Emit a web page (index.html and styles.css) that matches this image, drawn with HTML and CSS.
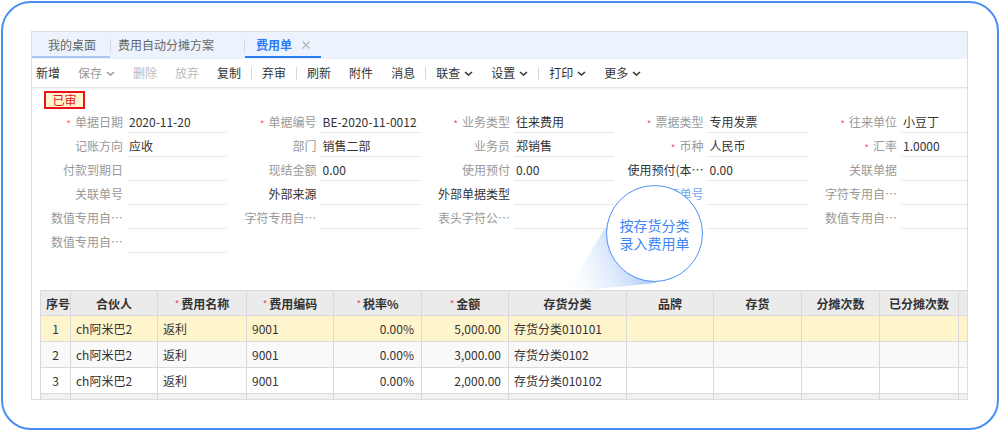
FILE: index.html
```html
<!DOCTYPE html>
<html lang="zh-CN">
<head>
<meta charset="utf-8">
<title>费用单</title>
<link rel="stylesheet" href="styles.css">
</head>
<body>
<div class="frame">
  <div class="panel">
    <div class="tabbar">
      <div class="tab tab-home">我的桌面</div>
      <span class="tsep"></span>
      <div class="tab tab-plan">费用自动分摊方案</div>
      <span class="tsep"></span>
      <div class="tab tab-active">费用单<svg class="close" width="8" height="8" viewBox="0 0 8 8"><path d="M0.5 0.5L7.5 7.5M7.5 0.5L0.5 7.5" stroke="#b3b3b3" stroke-width="1.1" fill="none"/></svg></div>
    </div>
    <div class="toolbar">
      <span class="tb first">新增</span>
      <span class="tb dim">保存<svg class="chev" width="9" height="5" viewBox="0 0 9 5"><path d="M1 1L4.5 4L8 1" stroke="currentColor" stroke-width="1.6" fill="none"/></svg></span>
      <span class="tb off">删除</span>
      <span class="tb off">放弃</span>
      <span class="tb">复制</span>
      <span class="bsep"></span>
      <span class="tb">弃审</span>
      <span class="bsep"></span>
      <span class="tb">刷新</span>
      <span class="tb">附件</span>
      <span class="tb">消息</span>
      <span class="bsep"></span>
      <span class="tb">联查<svg class="chev" width="9" height="5" viewBox="0 0 9 5"><path d="M1 1L4.5 4L8 1" stroke="currentColor" stroke-width="1.6" fill="none"/></svg></span>
      <span class="tb">设置<svg class="chev" width="9" height="5" viewBox="0 0 9 5"><path d="M1 1L4.5 4L8 1" stroke="currentColor" stroke-width="1.6" fill="none"/></svg></span>
      <span class="bsep"></span>
      <span class="tb">打印<svg class="chev" width="9" height="5" viewBox="0 0 9 5"><path d="M1 1L4.5 4L8 1" stroke="currentColor" stroke-width="1.6" fill="none"/></svg></span>
      <span class="tb">更多<svg class="chev" width="9" height="5" viewBox="0 0 9 5"><path d="M1 1L4.5 4L8 1" stroke="currentColor" stroke-width="1.6" fill="none"/></svg></span>
    </div>
    <div class="form">
      <div class="stamp">已审</div>
      <div class="fields">
        <div class="f"><span class="lab"><i class="req">*</i>单据日期</span><span class="val">2020-11-20</span></div>
        <div class="f"><span class="lab"><i class="req">*</i>单据编号</span><span class="val">BE-2020-11-0012</span></div>
        <div class="f"><span class="lab"><i class="req">*</i>业务类型</span><span class="val">往来费用</span></div>
        <div class="f"><span class="lab"><i class="req">*</i>票据类型</span><span class="val">专用发票</span></div>
        <div class="f"><span class="lab"><i class="req">*</i>往来单位</span><span class="val">小豆丁</span></div>

        <div class="f"><span class="lab">记账方向</span><span class="val">应收</span></div>
        <div class="f"><span class="lab">部门</span><span class="val">销售二部</span></div>
        <div class="f"><span class="lab">业务员</span><span class="val">郑销售</span></div>
        <div class="f"><span class="lab"><i class="req">*</i>币种</span><span class="val">人民币</span></div>
        <div class="f"><span class="lab"><i class="req">*</i>汇率</span><span class="val">1.0000</span></div>

        <div class="f"><span class="lab">付款到期日</span><span class="val"></span></div>
        <div class="f"><span class="lab">现结金额</span><span class="val">0.00</span></div>
        <div class="f"><span class="lab">使用预付</span><span class="val">0.00</span></div>
        <div class="f"><span class="lab dark">使用预付(本…</span><span class="val">0.00</span></div>
        <div class="f"><span class="lab">关联单据</span><span class="val"></span></div>

        <div class="f"><span class="lab">关联单号</span><span class="val"></span></div>
        <div class="f"><span class="lab dark">外部来源</span><span class="val"></span></div>
        <div class="f"><span class="lab dark">外部单据类型</span><span class="val"></span></div>
        <div class="f"><span class="lab link">来源单号</span><span class="val"></span></div>
        <div class="f"><span class="lab">字符专用自…</span><span class="val"></span></div>

        <div class="f"><span class="lab">数值专用自…</span><span class="val"></span></div>
        <div class="f"><span class="lab">字符专用自…</span><span class="val"></span></div>
        <div class="f"><span class="lab">表头字符公…</span><span class="val"></span></div>
        <div class="f"><span class="lab"></span><span class="val"></span></div>
        <div class="f"><span class="lab">数值专用自…</span><span class="val"></span></div>

        <div class="f"><span class="lab">数值专用自…</span><span class="val"></span></div>
      </div>
    </div>
    <div class="grid-wrap">
      <table class="grid">
        <colgroup>
          <col style="width:30px"><col style="width:87px"><col style="width:89px"><col style="width:87px"><col style="width:88px"><col style="width:87px"><col style="width:118px"><col style="width:87px"><col style="width:88px"><col style="width:78px"><col style="width:79px"><col style="width:30px">
        </colgroup>
        <thead>
          <tr>
            <th>序号</th><th>合伙人</th><th><i class="hreq">*</i>费用名称</th><th><i class="hreq">*</i>费用编码</th><th><i class="hreq">*</i>税率%</th><th><i class="hreq">*</i>金额</th><th>存货分类</th><th>品牌</th><th>存货</th><th>分摊次数</th><th>已分摊次数</th><th></th>
          </tr>
        </thead>
        <tbody>
          <tr class="r-sel">
            <td class="idx">1</td><td>ch阿米巴2</td><td>返利</td><td>9001</td><td class="num">0.00%</td><td class="num">5,000.00</td><td>存货分类010101</td><td></td><td></td><td></td><td></td><td></td>
          </tr>
          <tr class="r-alt">
            <td class="idx">2</td><td>ch阿米巴2</td><td>返利</td><td>9001</td><td class="num">0.00%</td><td class="num">3,000.00</td><td>存货分类0102</td><td></td><td></td><td></td><td></td><td></td>
          </tr>
          <tr>
            <td class="idx">3</td><td>ch阿米巴2</td><td>返利</td><td>9001</td><td class="num">0.00%</td><td class="num">2,000.00</td><td>存货分类010102</td><td></td><td></td><td></td><td></td><td></td>
          </tr>
          <tr class="r-last">
            <td></td><td></td><td></td><td></td><td></td><td></td><td></td><td></td><td></td><td></td><td></td><td></td>
          </tr>
        </tbody>
      </table>
    </div>
  </div>
</div>
<svg class="wedge" width="1000" height="431" viewBox="0 0 1000 431">
  <defs>
    <linearGradient id="wg" gradientUnits="userSpaceOnUse" x1="568" y1="291" x2="640" y2="262">
      <stop offset="0" stop-color="#ffffff" stop-opacity="0.2"/>
      <stop offset="1" stop-color="#b3cef8"/>
    </linearGradient>
  </defs>
  <polygon points="607,225 656,283 566,292" fill="url(#wg)"/>
</svg>
<div class="bubble"><span>按存货分类</span><span>录入费用单</span></div>
</body>
</html>
```

FILE: styles.css
```css
* { box-sizing: border-box; }
html, body { margin: 0; padding: 0; }
body {
  width: 1000px;
  height: 431px;
  overflow: hidden;
  position: relative;
  background: #ffffff;
  font-family: "Noto Sans CJK SC", "Liberation Sans", sans-serif;
  font-size: 12px;
  color: #333333;
}
.frame {
  width: 998px;
  height: 429px;
  margin: 1px;
  border: 2px solid #4a8ef4;
  border-radius: 30px;
  padding: 28px 0 0 28px;
}
.panel {
  width: 937px;
  height: 369px;
  border: 1px solid #dcdcdc;
  overflow: hidden;
  background: #ffffff;
}
/* tabs */
.tabbar {
  height: 27px;
  background: #edf3fd;
  display: flex;
  align-items: flex-start;
}
.tab {
  height: 26px;
  padding-top: 2px;
  line-height: 22px;
  border-bottom: 2px solid transparent;
  color: #666666;
  white-space: nowrap;
  display: flex;
  align-items: center;
}
.tab-home { width: 78px; padding-left: 16px; border-bottom-color: #a9c8f2; }
.tab-plan { width: 133px; padding-left: 7px; }
.tab-active {
  width: 76px;
  padding-left: 11px;
  color: #2d7bf5;
  font-weight: bold;
  border-bottom-color: #2d7bf5;
}
.close { margin-left: 10px; }
.tsep {
  width: 1px;
  height: 14px;
  margin-top: 7px;
  background: #d3dbe6;
}
/* toolbar */
.toolbar {
  height: 29px;
  display: flex;
  align-items: center;
  border-bottom: 1px solid #e3e3e3;
  box-shadow: 0 1px 2px rgba(0, 0, 0, 0.06);
}
.tb {
  padding: 0 9px;
  line-height: 28px;
  color: #333333;
  white-space: nowrap;
  display: flex;
  align-items: center;
}
.tb.first { padding-left: 4px; }
.tb.dim { color: #999999; }
.tb.off { color: #bbbbbb; }
.chev { margin-left: 4px; }
.bsep {
  width: 1px;
  height: 13px;
  margin: 0 1px;
  background: #d9d9d9;
}
/* form */
.form { padding-top: 3px; }
.stamp {
  width: 41px;
  height: 18px;
  margin-left: 12px;
  border: 2px solid #e8141a;
  background: #fff6cf;
  color: #e8141a;
  font-size: 12px;
  line-height: 14px;
  text-align: center;
}
.fields {
  display: grid;
  grid-template-columns: repeat(5, 193.5px);
  grid-auto-rows: 24px;
  padding-left: 1px;
}
.f { display: flex; }
.lab {
  width: 90px;
  flex: none;
  text-align: right;
  color: #999999;
  line-height: 21px;
  padding-top: 2px;
  white-space: nowrap;
  overflow: hidden;
}
.lab.dark { color: #333333; }
.lab.link { color: #6fa3f3; }
.req {
  font-style: normal;
  color: #f5587b;
  font-size: 10px;
  margin-right: 4px;
  vertical-align: -1px;
}
.val {
  flex: 1;
  margin-left: 4px;
  height: 24px;
  border-bottom: 1px solid #e6e6e6;
  line-height: 21px;
  padding-top: 2px;
  padding-left: 2px;
  color: #333333;
  white-space: nowrap;
  overflow: hidden;
}
/* grid */
.grid-wrap {
  margin-top: 37px;
  margin-left: 8px;
}
.grid {
  border-collapse: collapse;
  table-layout: fixed;
  width: 938px;
}
.grid th, .grid td {
  border: 1px solid #d9d9d9;
  padding: 0 5px;
  white-space: nowrap;
  overflow: hidden;
  font-size: 12px;
}
.grid th {
  height: 25px;
  background: #ebebeb;
  font-weight: bold;
  color: #333333;
  text-align: center;
}
.grid td {
  height: 26px;
  color: #333333;
}
.grid td.idx { text-align: center; padding: 0; }
.grid td.num { text-align: right; padding-right: 7px; }
.hreq {
  font-style: normal;
  color: #f04a6a;
  font-size: 10px;
  font-weight: normal;
  margin-right: 2px;
  vertical-align: 1px;
}
.r-sel td { background: #fff5cc; }
.r-alt td { background: #f9f9f9; }
.r-last td { background: #f2f2f2; }
/* callout */
.wedge {
  position: absolute;
  left: 0;
  top: 0;
  pointer-events: none;
}
.bubble {
  position: absolute;
  left: 606px;
  top: 185px;
  width: 97px;
  height: 97px;
  border-radius: 50%;
  border: 1.5px solid #4f8ff5;
  background: #ffffff;
  display: flex;
  flex-direction: column;
  align-items: center;
  justify-content: center;
  color: #3d86f2;
  font-size: 14px;
  line-height: 18px;
}
```
